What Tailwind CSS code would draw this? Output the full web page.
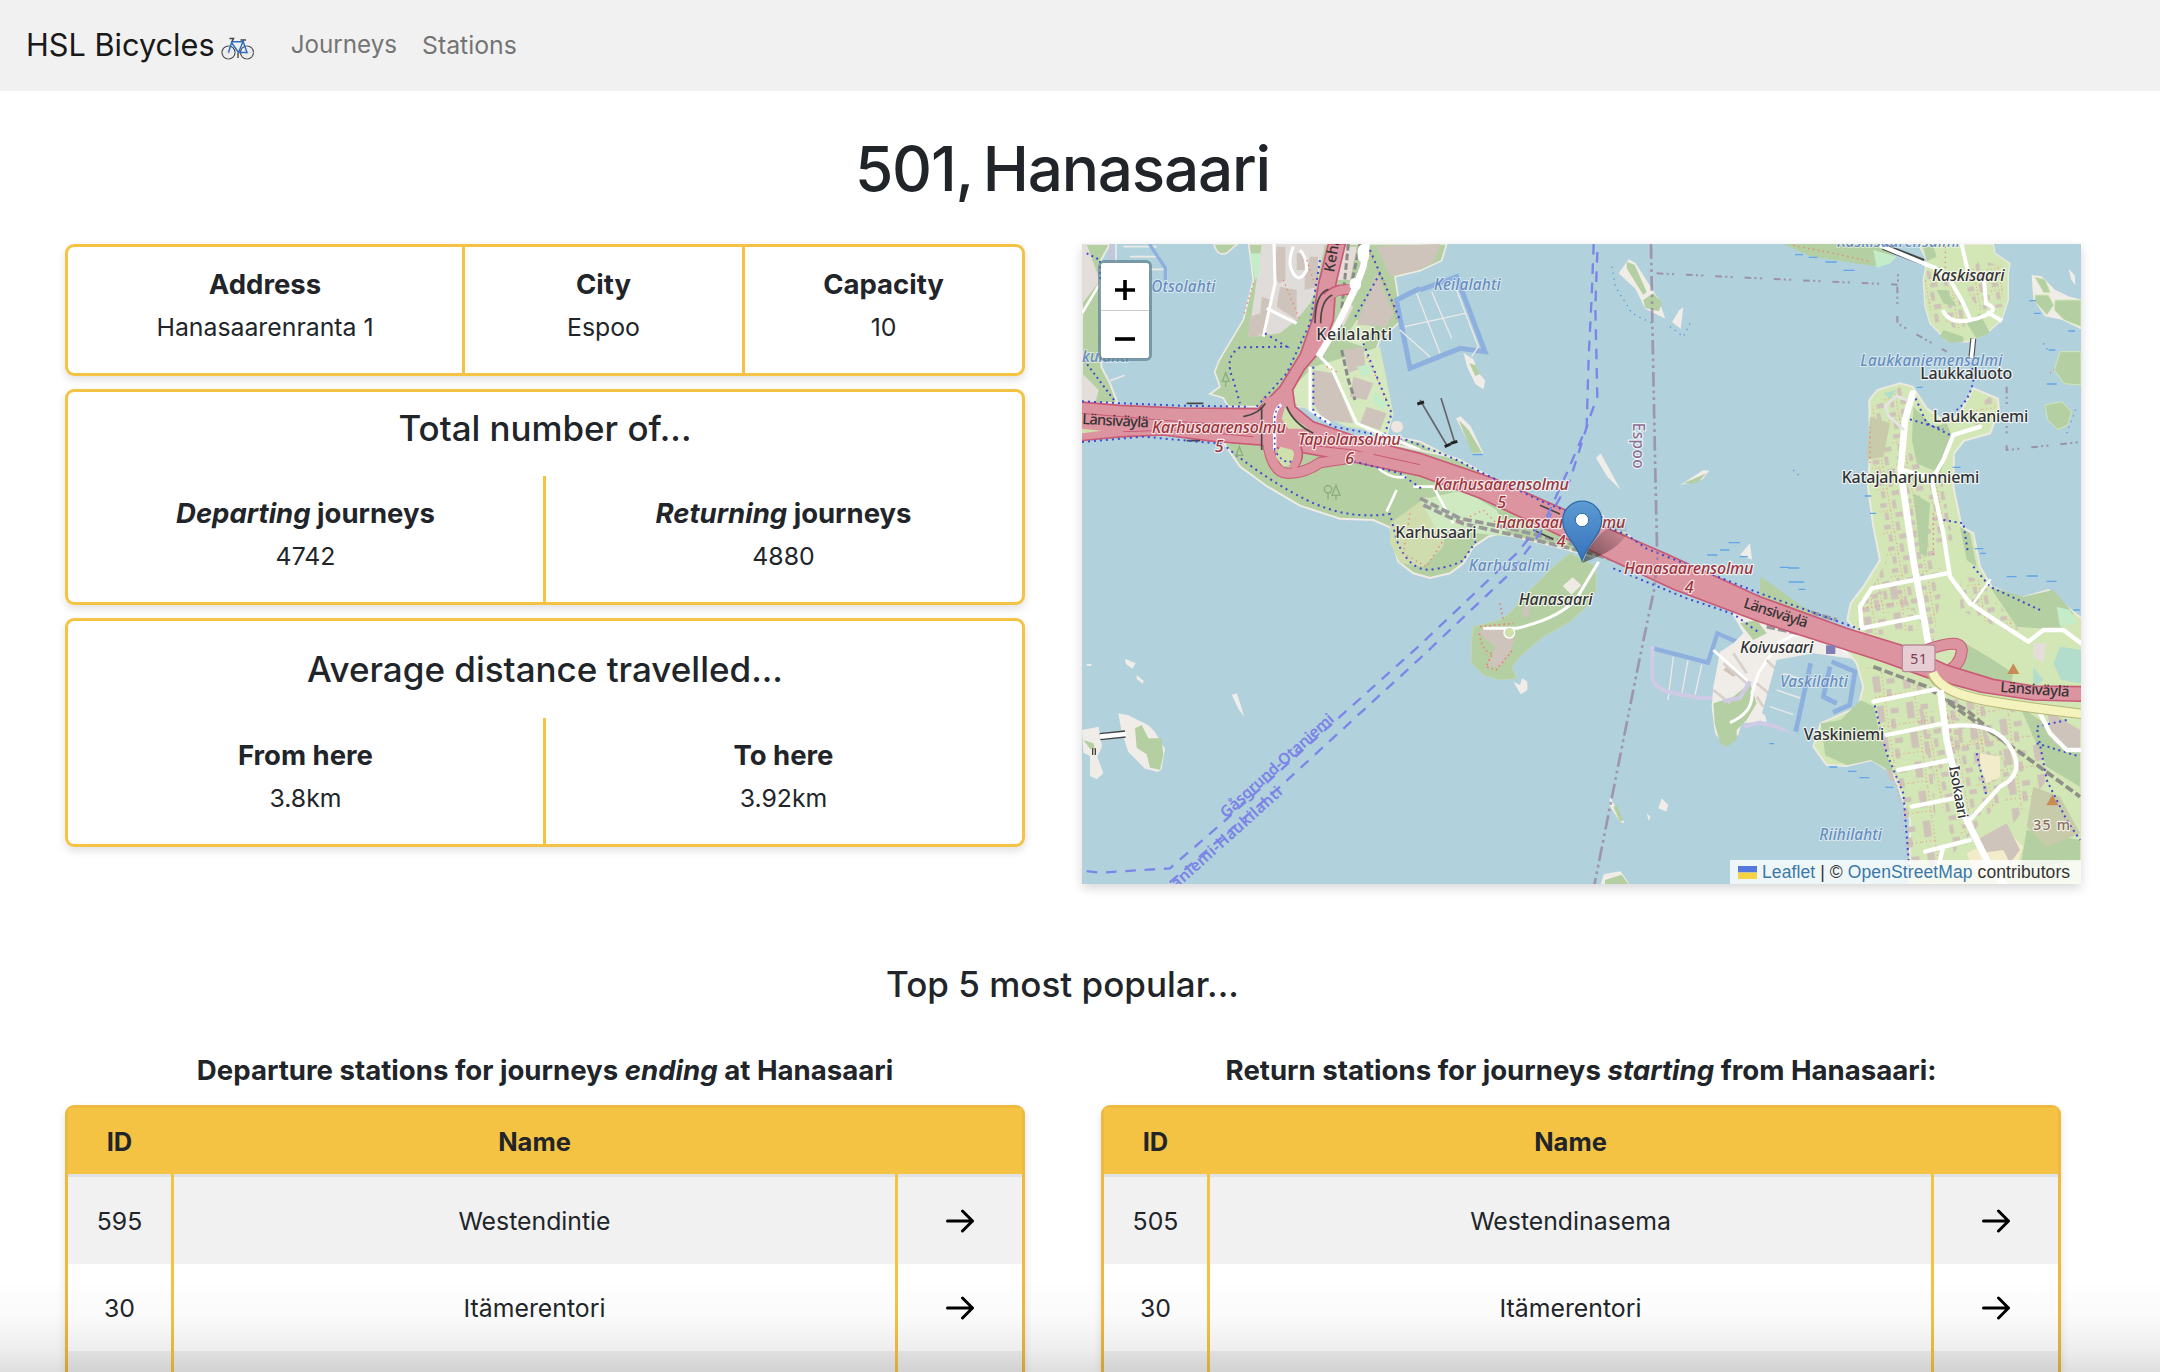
<!DOCTYPE html>
<html lang="en">
<head>
<meta charset="utf-8">
<title>HSL Bicycles</title>
<script src="https://cdn.jsdelivr.net/npm/@tailwindcss/browser@4"></script>
</head>
<body class="relative h-[1372px] overflow-hidden bg-white font-['Inter',sans-serif] text-[24.8px] leading-[42px] text-[#212529]">

<nav class="flex h-[91px] items-center bg-[#f1f1f1] pl-[26px]">
  <a class="-mt-[2px] flex items-center text-[30.7px] text-[#191919]">HSL Bicycles
    <svg class="ml-[6px] mt-[8px] h-[24px] w-[34px]" viewBox="0 0 34 24" fill="none">
      <circle cx="7.500" cy="15.500" r="6.500" stroke="#4a4a4a" stroke-width="1.200"/>
      <circle cx="26" cy="15.500" r="6.500" stroke="#4a4a4a" stroke-width="1.200"/>
      <path d="M3 11l9 9M3 20l9-9M7.500 9v13M1 15.500h13M21.500 11l9 9M21.500 20l9-9M26 9v13M20 15.500h13" stroke="#dadada" stroke-width=".6"/>
      <path d="M7.500 15.500L10.800 4.800H22L17.500 15.500H26L21.800 3.500M17.500 15.500L10.800 6" stroke="#2f6fc4" stroke-width="1.500"/>
      <path d="M8.500 1.500h4l-1.500 3M19.500 3h5.500" stroke="#444" stroke-width="1.500"/>
      <path d="M17 16v5" stroke="#6b5a48" stroke-width="1.600"/>
    </svg>
  </a>
  <a class="-mt-[2px] ml-[36px] text-[24.2px] text-[#747474]">Journeys</a>
  <a class="-mt-[2px] ml-[25px] text-[24.8px] text-[#747474]">Stations</a>
</nav>

<h1 class="mt-[43px] h-[70px] w-[2125px] text-center text-[62px] font-medium leading-[70px] tracking-[-1.2px] [word-spacing:-5px]">501, Hanasaari</h1>

<main class="px-[65px]">
  <div class="mt-[40px] flex items-start gap-[57px]">
    <div class="flex w-[960px] flex-col text-center">
      <section class="flex h-[132px] rounded-[9px] border-3 border-[#f5c344] shadow-[0_4px_8px_rgba(0,0,0,0.12)]">
        <div class="w-[397px] border-r-3 border-[#f5c344] pt-[16px]"><h5 class="text-[27.5px] font-bold">Address</h5><p class="pt-px">Hanasaarenranta 1</p></div>
        <div class="w-[280px] border-r-3 border-[#f5c344] pt-[16px]"><h5 class="text-[27.5px] font-bold">City</h5><p class="pt-px">Espoo</p></div>
        <div class="flex-1 pt-[16px]"><h5 class="text-[27.5px] font-bold">Capacity</h5><p class="pt-px">10</p></div>
      </section>
      <section class="mt-[13px] flex h-[216px] flex-col rounded-[9px] border-3 border-[#f5c344] shadow-[0_4px_8px_rgba(0,0,0,0.12)]">
        <h3 class="h-[84px] pt-[15px] text-[34.900px] font-medium">Total number of...</h3>
        <div class="grid flex-1 grid-cols-2">
          <div class="-mr-px border-r-3 border-[#f5c344] pt-[16px]"><h5 class="text-[27.5px] font-bold"><i>Departing</i> journeys</h5><p class="pt-px">4742</p></div>
          <div class="pt-[16px]"><h5 class="text-[27.5px] font-bold"><i>Returning</i> journeys</h5><p class="pt-px">4880</p></div>
        </div>
      </section>
      <section class="mt-[13px] flex h-[229px] flex-col rounded-[9px] border-3 border-[#f5c344] shadow-[0_4px_8px_rgba(0,0,0,0.12)]">
        <h3 class="h-[97px] pt-[27px] text-[35px] font-medium">Average distance travelled...</h3>
        <div class="grid flex-1 grid-cols-2">
          <div class="-mr-px border-r-3 border-[#f5c344] pt-[16px]"><h5 class="text-[27.5px] font-bold">From here</h5><p class="pt-px">3.8km</p></div>
          <div class="pt-[16px]"><h5 class="text-[27.5px] font-bold">To here</h5><p class="pt-px">3.92km</p></div>
        </div>
      </section>
    </div>

    <div class="relative h-[640px] w-[999px] shadow-[0_4px_10px_rgba(0,0,0,0.16)]">
      <svg class="block h-[640px] w-[999px]" viewBox="6 12 2997 1920" font-family="'Noto Sans',sans-serif" fill="none">
        <defs>
          <pattern id="houses" width="74" height="66" patternUnits="userSpaceOnUse" patternTransform="rotate(-10)">
            <path fill="#cfc2b8" d="M6 8h20v14H6zM42 4h12v26H42zM14 38h12v22H14zM46 42h22v14H46z"/>
            <path stroke="#ee8b80" stroke-width="3" stroke-dasharray="3 8" d="M34 0v66M0 32h40"/>
          </pattern>
          <pattern id="blocks" width="90" height="90" patternUnits="userSpaceOnUse" patternTransform="rotate(-8)">
            <path fill="#cfc2b8" d="M10 8h22v50H10zM52 20h24v16H52zM48 52h14v30H48z"/>
            <path stroke="#ee8b80" stroke-width="3" stroke-dasharray="3 9" d="M40 0v90M0 70h90"/>
          </pattern>
          <linearGradient id="pin" x1="0" y1="0" x2="0" y2="1"><stop offset="0" stop-color="#5c9bd3"/><stop offset="1" stop-color="#3673bd"/></linearGradient>
          <linearGradient id="pinshadow" x1="0" y1="1" x2="1" y2="0"><stop offset="0" stop-color="#000" stop-opacity=".5"/><stop offset="1" stop-color="#000" stop-opacity="0"/></linearGradient>
        </defs>
        <rect x="0" y="0" width="3010" height="1940" fill="#b1d1dd"/>

        <!-- north-west shore and Keilalahti -->
        <path fill="#b4cfa1" stroke="#ece7e1" stroke-width="6" d="M6 12H90L58 70 66 300 64 380 90 430 112 488 6 492z"/>
        <path fill="#e3deda" d="M6 12h14l40 110-54 70zM6 400l50 50-10 40H6z"/>
        <path stroke="#fff" stroke-width="8" d="M6 220L60 130"/>
        <path stroke="#c9c3dd" stroke-width="12" d="M94 12v60"/>
        <path stroke="#ece9e7" stroke-width="5" d="M108 12v56M130 20h100M150 50h90M150 88h105M90 422l44-16"/>
        <path stroke="#8fb0df" stroke-width="10" d="M208 12L256 84V120"/>
        <path fill="#b4cfa1" stroke="#ece7e1" stroke-width="5" d="M402 12q10 40 40 26l30-26z"/>
        <path fill="#b4cfa1" stroke="#efeae4" stroke-width="5" d="M506 12L520 120 490 240 430 340 418 360 404 395 420 440 390 462 430 474 445 500H720L1020 650 1090 640 1020 605 920 585 938 520 880 350 900 300 965 240 945 110 1020 92 1085 62 1100 12z"/>
        <path fill="#d6e8bd" d="M640 440l60-60 200-60 40 200-20 60-120-20-160-70zM1020 610l100 40-20 20zM790 300l40-60 50 20-30 60z"/>
        <path fill="#e0dcd9" d="M545 12H735L705 160 690 190 650 240 600 280 505 290 520 190z"/>
        <path fill="#cfc4bb" d="M890 20L1080 12 1062 66 1010 92 930 108zM890 100l50 120-20 40-90-6zM790 330l60-8 6 60-50 16zM700 390l60 10 60 150-90-10-30-50zM820 410l60 20-20 50-50-10zM860 500l60 20-20 50-60-20zM590 20h26v100l-20 10-14-30zM600 140l50 10v90l-60-40zM545 170l30 10-20 110-20-10zM510 230l30-10-5 70h-30zM650 40h24v50h-24zM690 50h24v90l-40 10v-40z"/>
        <path fill="#e6dcd8" d="M770 20h60l-20 100-50 0zM770 240l30-60 20 20-30 60z"/>
        <path fill="#c4ecc8" d="M510 40h30v60l-15 20zM830 380l40-8 10 20-30 20zM880 450l40 40-10 20-30-20z"/>
        <path stroke="#8a8a8a" stroke-width="9" stroke-dasharray="20 9" d="M805 12L780 260M840 12L815 130M785 330l20 90 20 60M1010 690l90 60"/>
        <path stroke="#fff" stroke-width="9" d="M582 12L585 130 550 290M560 205l90 45M640 20q-20 50 0 80t40-10q0-40-20-60M720 350L755 385 830 550 1020 630M690 380l0 130 60 40"/>
        <path stroke="#ee7f74" stroke-width="4" stroke-dasharray="4 11" d="M520 130L490 230M680 60l30 90M610 120l50 120M740 380l40 20M870 40l60 120 20 80M720 700q150-20 220 60M860 350l60 130"/>
        <circle cx="951" cy="560" r="18" fill="#f0e6e0"/>

        <!-- forest south of the motorway, Karhusaari -->
        <path fill="#b4cfa1" stroke="#efeae4" stroke-width="6" d="M432 610L480 680 560 738 660 797 780 836 880 840 930 862 942 920 955 965 1000 1000 1050 1014 1110 1000 1150 970 1180 920 1225 890 1260 880 1430 920 1540 950 1690 940 1640 880 1460 830 1380 790 1230 710 1130 655 700 560z"/>
        <path fill="#cfdcae" d="M930 850l110-80 60 60-10 90-60 60-70-10-30-60z"/>
        <path fill="#cfe9c0" d="M1020 780l130-30 100 60 40 80-100-10-120-10z"/>
        <path stroke="#fff" stroke-width="8" d="M1000 740h60l60 110M950 750l-30 65M890 680q40 40 90 30"/>
        <path stroke="#999" stroke-width="11" stroke-dasharray="26 10" d="M1020 775l120 60 150 30 240 60 200 60 340 95 200 60M1030 795l120 56 150 34 230 54 200 60 300 86"/>
        <path stroke="#3f49d0" stroke-width="6" stroke-dasharray="6 12" d="M440 622Q560 720 680 780T930 822L950 900Q990 1000 1060 988T1150 960L1190 900"/>
        <path stroke="#ee7f74" stroke-width="4" stroke-dasharray="4 11" d="M990 820l-20 120 70 40 50-80M1130 850l80-40 60 60"/>
        <g stroke="#8aae7f" stroke-width="4"><circle cx="744" cy="748" r="11"/><path d="M744 760v18M768 736l-12 30h24zM768 766v14M437 398l-10 26h20zM437 424v16M478 620l-10 26h20z"/></g>

        <!-- marinas -->
        <g stroke="#8eb0df" stroke-width="15"><path d="M1020 145L950 180 965 260 990 385 1140 325 1215 335 1130 110 1020 150"/><path stroke-width="13" d="M1722 1226L1884 1268 1912 1180 1980 1210M2195 1290L2150 1480"/></g>
        <path stroke="#ece9e7" stroke-width="4" d="M975 260l180-40M1055 155l60 140M1010 160l70 180M1130 150l65 170-20 30M960 270l90 80M1780 1250l-16 130M1824 1260l-20 110M1865 1275l-20 90"/>
        <path stroke="#cfcbe6" stroke-width="12" d="M1717 1218v100q10 30 60 40l80 16h110"/>
        <path stroke="#666" stroke-width="5" d="M1020 480l80 135M1083 474l40 130"/>
        <path stroke="#222" stroke-width="9" d="M1012 492l20-6M1094 620l18-8M1112 610l20-6"/>

        <!-- islets -->
        <g fill="#f0ece7">
          <path d="M1150 338l30 20 16 40 20 24-6 26-24-16-24-50zM1128 535l14-6 30 30 38 80-30 0zM1616 100l30-42 20 10 70 110 20 58-60-30-30-60zM1798 210l12-8-8 64-26-20zM1562 640l60 110-40-40-34-56zM1800 736l70-46 18 2-20 26z"/>
          <path d="M135 1256l32 14-10 16-20-14zM170 1305l22 18-4 8-18-14zM20 1272h14v6H20zM455 1364l16-4 22 70-16-20zM6 1470l50-10 10 60-14 30 18 50-20 18-20-10v-60l-20-10z"/>
          <path d="M115 1420l30 6 60 30 20 20 30 50-10 60-10 10-40-10-50-50-20-60zM1300 1325l20 10 6-20 16 10v26l-20 12zM1590 1670l44 80-14-4-32-50zM1745 1675l20 20-6 20-24-10zM1700 1720l12 10-6 12zM1562 1932l10-30 50-8 26 38zM1980 945l30-36 6 50z"/>
        </g>
        <g fill="#b4cfa1">
          <path d="M1168 370l20 6 12 26-14 6zM1136 540l30 30 40 68-30 0zM1640 65l24 10 36 80-10 10-50-80zM1690 180l30-20 26 30-10 24-40-10zM1810 730l70-30-30 30zM165 1465l20-10 20 40 40 0 5 50-10 44-30-6-10-40-30-20zM1600 1700l10-6 20 46-10 6zM1575 1920l50-16 20 28h-70zM10 1500l30 10 6 20-16-4z"/>
        </g>
        <path stroke="#444" stroke-width="22" d="M60 1490l76-8"/><path stroke="#fff" stroke-width="14" d="M60 1490l78-8"/>
        <path stroke="#444" stroke-width="4" d="M38 1525v20M46 1525v20"/>

        <!-- Hanasaari -->
        <path fill="#b4cfa1" stroke="#c2d6b0" stroke-width="3" d="M1548 980V1050L1520 1100 1470 1145 1390 1190 1330 1240 1295 1280 1310 1315 1260 1320 1210 1305 1175 1270 1175 1200 1180 1160 1260 1140 1290 1120 1330 1070 1370 1030 1420 980 1470 940z"/>
        <path fill="#efeae4" d="M1448 1038l30-26 26 24-30 28z"/>
        <path fill="#cfc4bb" d="M1210 1160l90 0 2 50-20 40-20 30-40 0 24-60-50-40zM1330 1100l20-6-6 36h-18z"/>
        <path stroke="#fff" stroke-width="9" d="M1210 1165h100q130-30 180-90l66-110"/>
        <circle cx="1288" cy="1178" r="16" fill="#cfe0ad" stroke="#fff" stroke-width="4"/>
        <path stroke="#ee7f74" stroke-width="5" stroke-dasharray="5 9" d="M1198 1180q10 60 40 60l-20 40 30 10 50-60M1260 1090l10 50M1200 1160l100-10"/>

        <!-- Koivusaari and Vaskilahti -->
        <path fill="#f0ece7" d="M1950 1110L1990 1180 1960 1210 1920 1235 1900 1340 1895 1400 1905 1480 1925 1508 1975 1485 1985 1450 2060 1445 2055 1425 2100 1290 2200 1240 2340 1260 2350 1380 2480 1380 2470 1240 2080 1120z"/>
        <path fill="#b4cfa1" d="M1980 1150l50-10 30 40-40 20zM1900 1390l60-20 50-40 20 60-30 50-30 30v30l-30 20-20-10-16-60zM2040 1010l30 20 140 100 130 50-300-90z"/>
        <path fill="#cfc4bb" d="M1930 1290l30 20 20-10-40-20zM2340 1260l60 30-20 20-50-20z"/>
        <path stroke="#fff" stroke-width="9" d="M1950 1448q70-30 66-90l20-60 60-90 60-30 120 40 70 50 20 80 34 60M1900 1230l110 100"/>
        <path stroke="#d7d0cb" stroke-width="8" d="M1930 1270l70 60M1960 1240l40 60M1900 1350l50 40M2060 1260l60 60M2030 1330l60 50M2030 1370l20 30"/>
        <path stroke="#cfcbe6" stroke-width="12" d="M1930 1384l50-10 30-50M1990 1460l50-12 110 30"/>
        <path stroke="#999" stroke-width="11" stroke-dasharray="26 9" d="M2060 1140l200 60 120 70 160 60M2060 1160l140 30"/>
        <path fill="#b1d1dd" d="M2090 1260l110-20 10 60-50 180-24 0-90-60z"/>
        <path stroke="#8eb0df" stroke-width="14" d="M2192 1270l-45 205M2255 1265l70 30-16 100-50 22M2250 1280l-20 90 40 20"/>
        <path stroke="#ece9e7" stroke-width="4" d="M2110 1300l60 20M2090 1350l70 24M2070 1400l70 24"/>

        <!-- Lauttasaari -->
        <path fill="#d2e7b5" stroke="#ece9e0" stroke-width="6" d="M2368 480L2392 450 2460 430 2498 440 2540 505 2600 548 2640 520 2680 445 2754 476 2757 512 2730 580 2652 602 2622 640 2620 740 2645 860 2680 880 2700 980 2735 1040 2820 1075 2905 1050 2960 1100 3010 1140V1940H2490V1740L2440 1600 2375 1560 2300 1578 2240 1575 2200 1520 2222 1450 2290 1420 2335 1400 2350 1340 2330 1270 2290 1220 2345 1190 2302 1140 2312 1090 2350 1040 2400 960 2380 860 2364 740 2370 640z"/>
        <path fill="url(#houses)" d="M2376 500l84-60 30 30-20 160 40 20 60-10 50 260-60 10 30 100-30 200-60-100-170 20 90-170-50-320zM2640 1000l60 20 140 180-200-90zM2500 1400l240 60 60 180-180 200-20-100z"/>
        <path fill="url(#blocks)" d="M2340 1080l120-50 60 140-180 20zM2360 1280l180 60 40 580-90 10-30-240-50-120-20-180zM2600 1350l220 60 120 160-140 180-60-160-140-60zM2660 520l70-50 20 30-60 60z"/>
        <path fill="#b4cfa1" d="M2500 500l60 60 40-10 20 50-40 100-70-30-14-70zM2222 1450l60-10 60-60 40 20 20 100 40 100-70-40-70 16-66-30zM2640 1200l100 60 60 40-10 40-180-40zM2730 1040l100 30 90-20 60 70-40 50-130-10zM2640 860l30 20 20 100-30-20zM2820 1400l180 120v120l-100-60zM2840 1770l160 30v60l-180 30zM2500 760l50 30-10 160-20-10z"/>
        <path fill="#c8cba9" d="M2860 1640l80 30 60 110-100 40-60-60zM2370 530l60 20-20 100-50 10z"/>
        <path fill="#b2dccb" d="M2920 1270l20-50 63 10v100l-60-10zM2860 1280l30 40-30 20zM2410 460l40-10-20 26z"/>
        <path fill="#c4ecc8" d="M2930 1100l40 10 20 40-50 10z"/>
        <path fill="#e3deda" d="M2860 1210l40 0-10 60-30-20z"/>
        <path fill="#f3eccb" d="M2700 1540l60 10 0 60-40 20-20-50zM2660 1840l130-60 40 40-30 80-110 10z"/>
        <path fill="#cfc4bb" d="M2690 1800l90-50 40 80-30 40-20-40-70 10zM2900 1410l100 60v60l-80-20z"/>
        <path stroke="#8f8f88" stroke-width="11" stroke-dasharray="26 10" d="M2380 1280l160 60 110 80 160 110 190 140M2600 1380l60 30 130 110"/>
        <path stroke="#3f49d0" stroke-width="6" stroke-dasharray="6 11" d="M2680 300l-6 60 6 60q-10 60-50 90M2500 460l40 90 80 40M2490 538l100 30M2590 840l60 10 14 90M2680 980l50 60 150 70M2380 1380l40 160 50 120 20 250M2690 1540l30 130M2960 1440l-90 20 30 160 60 120 40 60M2870 1510l130 40"/>
        <g stroke="#fff" stroke-width="13" stroke-linecap="round" stroke-linejoin="round">
          <path stroke-width="20" d="M2498 460L2475 540 2462 690 2500 960 2545 1210M2580 1340L2600 1500 2650 1720 2740 1900 2780 1940"/>
          <path d="M2620 585L2590 660 2555 720 2590 880 2610 1010 2670 1090 2760 1150 2845 1205 2890 1170 2950 1170 3003 1210M2470 690L2540 710M2620 585L2700 560M2345 1165L2340 1100 2375 1045 2600 1000M2345 1165L2520 1130M2380 1385L2580 1345M2420 1485L2590 1450M2600 1460Q2740 1440 2790 1520T2760 1640L2660 1750M2455 1590L2610 1560M2495 1700L2620 1675M2535 1835L2670 1800M2590 1820l-20 80M2875 1410L2910 1480 2960 1530H3003"/>
          <path stroke="#e4e4e4" stroke-width="8" d="M2480 480l-30-12-34 30 10 30 44 40"/>
          <path stroke-width="7" d="M2730 1020l-50 70"/>
        </g>

        <!-- motorway and its ramps -->
        <path stroke="#ca5a76" stroke-width="36" d="M2540 1230Q2650 1190 2645 1235T2590 1300"/>
        <path stroke="#dd94a1" stroke-width="30" d="M2540 1230Q2650 1190 2645 1235T2590 1300"/>
        <path stroke="#ca5a76" stroke-width="34" d="M562 520V600Q575 700 625 700T720 668L880 644"/>
        <path fill="#dd94a1" stroke="#ca5a76" stroke-width="5" d="M0 486L120 496 300 504 535 506 600 440 662 340 700 230 716 130 745 12H796L768 130 760 240 732 320 672 390 638 450 645 500 700 545 860 600 1020 640 1240 715 1400 785 1640 890 1760 942 2040 1070 2300 1165 2480 1220 2600 1275 2740 1318 2860 1338 3010 1340V1384L2860 1380 2700 1356 2540 1312 2400 1262 2040 1146 1780 1048 1560 945 1400 868 1200 775 1020 708 820 666 600 625 540 615 400 604 250 585 130 590 0 602z"/>
        <path stroke="#ca5a76" stroke-width="3" d="M6 520L300 545 520 560M130 575L300 570 520 590M640 610L820 630 1020 674"/>
        <path fill="#cfe0ad" d="M6 566l60 6-60 8zM615 500l20 30 50 36-60 0-20-30zM600 620l40 10 10 40-40 10-24-30z"/>
        <path stroke="#ca5a76" stroke-width="26" d="M648 610Q668 650 640 680"/>
        <path stroke="#dd94a1" stroke-width="28" d="M562 470V600Q575 700 625 700T720 668L880 644"/>
        <path stroke="#dd94a1" stroke-width="22" d="M640 600Q668 650 636 684"/>
        <path stroke="#ca5a76" stroke-width="32" d="M740 172Q770 140 820 152"/><path stroke="#dd94a1" stroke-width="26" d="M735 180Q770 140 824 150"/>
        <path stroke="#474747" stroke-width="5" d="M545 500v130M490 530q50-10 66-40M620 500q20 50 80 80M705 250q0-90 40-102M722 250q0-70 35-85M320 490h50M320 602h40M1380 796l60 26M1360 870l60 28"/>
        <path stroke="#fff" stroke-width="10" d="M584 630V530q4-26 20-36"/>
        <path stroke="#3f49d0" stroke-width="5" stroke-dasharray="6 10" d="M584 630V530q4-26 20-36M590 640q20 30 44 24"/>
        <path stroke="#fff" stroke-width="20" d="M860 12L850 80 828 140 770 260 715 350"/>
        <path stroke="#fff" stroke-width="34" stroke-linecap="round" d="M850 30v20M826 130v6"/>
        <path stroke="#3f49d0" stroke-width="6" stroke-dasharray="6 12" d="M6 484L130 490 300 497 500 500M6 606L190 590 430 612M530 500L620 400 690 250 720 60M555 280L620 320 480 322Q430 350 460 420L480 490M870 30L960 240M900 100L820 240M850 310L935 520 915 580M700 380V520L760 560 980 600 1120 655 1230 710 1390 786 1640 884 1700 926 2040 1060 2340 1168M1600 985L1820 1075 1960 1122 2040 1180M820 664L960 700 1030 750"/>
        <path stroke="#3f49d0" stroke-width="6" stroke-dasharray="6 10" d="M20 40l40 20v60M12 360l60 80 30 40"/>
        <path stroke="#b7b577" stroke-width="32" d="M2556 1300Q2580 1358 2720 1382T3010 1422"/>
        <path stroke="#f4f3bd" stroke-width="26" d="M2558 1297Q2580 1358 2720 1382T3010 1422"/>
        <path stroke="#fff" stroke-width="20" d="M2582 1350l6 60"/>
        <path fill="#c98a55" d="M2800 1270l18 32h-36zM2917 1664l18 32h-36z"/>
        <rect x="2238" y="1216" width="28" height="26" fill="#7e80b5"/>

        <!-- Kaskisaari and northern islands -->
        <path fill="#d2e7b5" stroke="#ece9e0" stroke-width="4" d="M2515 12L2540 60 2530 120 2535 200 2550 250 2600 302 2660 306 2720 280 2765 240 2785 180 2785 100 2790 70 2745 40 2740 12z"/>
        <path fill="url(#houses)" d="M2535 90l60 20 60 100 0 60-90-20-30-80zM2700 60l70 20 0 120-70 10-60-80z"/>
        <path fill="#b4cfa1" d="M2660 250l40-30 30 60-40 15zM2590 270l60 20 0 15-40 4-30-20zM2530 20l30 0 10 30-30 14zM2570 150l30 0 30 50-40-10zM2110 12L2190 48 2300 66 2380 78 2420 60 2440 40 2400 12z"/>
        <path fill="#c4ecc8" d="M2380 30l70 20-20 20-40 14z"/>
        <path stroke="#ee7f74" stroke-width="4" stroke-dasharray="4 11" d="M2140 16l140 28 90 20M2596 20v90M2370 560v120M2880 150l120 80M2910 400l60-60 40 60M2560 820l0 130"/>
        <path stroke="#444" stroke-width="20" d="M2410 20l120 46"/><path stroke="#fff" stroke-width="13" d="M2400 16l170 70"/>
        <path stroke="#fff" stroke-width="12" d="M2560 80L2610 120 2645 180 2672 240M2588 210Q2610 260 2690 236T2718 190L2712 120M2720 215l46 28M2645 12l20 90"/>
        <path stroke="#555" stroke-width="18" d="M2680 295l-6 60"/><path stroke="#fff" stroke-width="11" d="M2680 295l-6 60"/>
        <path fill="#f0ece7" d="M2855 105l30 4 40 40 40 20 40 10v90l-60-30-50-10-35-50z"/>
        <path fill="#b4cfa1" stroke="#d2e7b5" stroke-width="3" d="M2865 112l30 6 16 40-20 0zM2865 165l40 0 16 30-20 30-36-40zM2925 180l78 0v80l-50-20-30-30zM2940 335l63 0v100l-50-4-30-40zM2895 495l50-10 30 30-12 40-30 14-30-30z"/>
        <path fill="#f0ece7" d="M2966 86l18 20 2 30-12-16z"/>
        <path stroke="#62a5e8" stroke-width="4" d="M2145 44h24M2186 52h26M2236 66h34M2290 91h34M2848 182h20M2862 220h20M2965 273h20M2906 330h20M2900 432h30M2510 442h18M2618 682h24M2354 768h20M2370 820h18M2684 926h26M2700 940h18M1946 908h34M1882 945h30M1920 930h28M1980 950h24M1178 644h30M2100 982h26M2124 984h34M2126 1026h46M2156 1048h20M2780 1010h30M2840 1008h34M2900 1024h30M2068 1511h14M2248 1581h24M2304 1594h26M2338 1613h30M2416 1642h24M2980 1110h20"/>
        <path stroke="#5a9ad8" stroke-width="4" stroke-dasharray="4 14" d="M1596 80l10 60 50 80 60 30M1770 260l40 30 20-40M2140 690l20 20M2890 310l20 30M2960 580l30-80"/>

        <!-- administrative boundaries -->
        <path stroke="#98819f" stroke-width="8" stroke-dasharray="44 12 8 12 8 12" stroke-opacity=".75" d="M1713 12L1718 300 1726 700 1732 960 1722 1050 1680 1250 1600 1650 1542 1940"/>
        <path stroke="#98819f" stroke-width="6" stroke-dasharray="20 10 6 10 6 36" stroke-opacity=".8" d="M1730 100L2100 118 2454 134V70M2452 140V250L2600 335M2780 440V630L3003 606"/>

        <!-- ferry routes -->
        <g stroke="#7b86e8" stroke-width="7" stroke-dasharray="32 26">
          <path d="M1541 12L1535 170 1526 350 1520 560 1460 700 1400 830 1310 940 1020 1215 780 1430 420 1755 270 1885 60 1898 6 1892"/>
          <path d="M1552 36L1546 200 1552 470 1530 530 1470 720 1380 880 1290 1000 1020 1255 600 1640 255 1940"/>
        </g>

        <!-- labels -->
        <g font-size="48" font-weight="500" fill="#333" stroke="#fff" stroke-opacity=".75" stroke-width="7" stroke-linejoin="round" paint-order="stroke">
          <text x="709" y="299" textLength="227">Keilalahti</text>
          <text x="946" y="895" textLength="244">Karhusaari</text>
          <text x="2521" y="416" textLength="276">Laukkaluoto</text>
          <text x="2559" y="545" textLength="286">Laukkaniemi</text>
          <text x="2285" y="729" textLength="413">Katajaharjunniemi</text>
          <text x="2171" y="1500" textLength="242">Vaskiniemi</text>
          <g font-style="italic">
            <text x="2556" y="123" textLength="218">Kaskisaari</text>
            <text x="1316" y="1096" textLength="222">Hanasaari</text>
            <text x="1980" y="1240" textLength="220">Koivusaari</text>
          </g>
          <text transform="translate(6 552) rotate(3)" font-size="44" textLength="200" stroke="none">Länsiväylä</text>
          <text transform="translate(1988 1102) rotate(18)" font-size="44" textLength="200" stroke="none">Länsiväylä</text>
          <text transform="translate(2760 1356) rotate(4)" font-size="44" textLength="208" stroke="none">Länsiväylä</text>
          <text transform="translate(762 98) rotate(-80)" font-size="44" stroke="none">Kehä I</text>
          <text transform="translate(2607 1580) rotate(80)" font-size="44" textLength="160">Isokaari</text>
          <text x="2860" y="1769" font-size="42" fill="#876d5c" textLength="110">35 m</text>
          <text transform="translate(1660 548) rotate(90)" font-size="46" fill="#8d7095" textLength="138">Espoo</text>
        </g>
        <g font-size="48" font-weight="500" font-style="italic" fill="#9d343b" stroke="#fff" stroke-opacity=".75" stroke-width="7" stroke-linejoin="round" paint-order="stroke">
          <text x="216" y="579" textLength="402">Karhusaarensolmu</text><text x="404" y="636">5</text>
          <text x="654" y="615" textLength="308">Tapiolansolmu</text><text x="796" y="671">6</text>
          <text x="1062" y="749" textLength="405">Karhusaarensolmu</text><text x="1252" y="805">5</text>
          <text x="1248" y="863" textLength="388">Hanasaarensolmu</text><text x="1430" y="920">4</text>
          <text x="1632" y="1001" textLength="388">Hanasaarensolmu</text><text x="1814" y="1058">4</text>
        </g>
        <g font-size="46" font-weight="500" font-style="italic" fill="#678ebf" stroke="#fff" stroke-opacity=".5" stroke-width="6" stroke-linejoin="round" paint-order="stroke">
          <text x="214" y="155" textLength="192">Otsolahti</text>
          <text x="6" y="366" textLength="142">kulahti</text>
          <text x="1062" y="151" textLength="200">Keilalahti</text>
          <text x="2270" y="22" textLength="370">Kaskisaarensalmi</text>
          <text x="2341" y="377" textLength="426">Laukkaniemensalmi</text>
          <text x="1166" y="994" textLength="242">Karhusalmi</text>
          <text x="2100" y="1341" textLength="204">Vaskilahti</text>
          <text x="2218" y="1800" textLength="188">Riihilahti</text>
        </g>
        <g font-size="47" font-weight="600" fill="#7b83e6">
          <text transform="translate(438 1736) rotate(-42)" textLength="440">Gåsgrund-Otaniemi</text>
          <text transform="translate(246 1988) rotate(-42)" textLength="490">Otaniemi-Haukilahti</text>
        </g>
        <rect x="2467" y="1215" width="98" height="80" rx="8" fill="#e6cdd3" stroke="#b98a98" stroke-width="4"/>
        <text x="2516" y="1271" font-size="42" text-anchor="middle" fill="#7d3a50" textLength="50">51</text>

        <!-- station marker -->
        <path fill="url(#pinshadow)" d="M1508 968Q1530 900 1590 860T1640 880Q1620 930 1508 968z"/>
        <path fill="url(#pin)" stroke="#2e6ba8" stroke-width="4" d="M1506 962C1490 910 1448 885 1448 842A58 58 0 0 1 1565 842C1565 885 1522 910 1506 962z"/>
        <circle cx="1506" cy="840" r="20" fill="#fff" stroke="#2e6ba8" stroke-width="3"/>
      </svg>

      <div class="absolute left-[16px] top-[16px] flex w-[54px] flex-col rounded-[6px] border-[3px] border-[#5d8192]/70 bg-clip-padding">
        <button class="flex h-[48px] items-center justify-center rounded-t-[3px] border-b border-[#ccc] bg-white pt-[7px]"><svg class="size-[20px]" viewBox="0 0 20 20"><path d="M10 0v20M0 10h20" stroke="#000" stroke-width="3.600"/></svg></button>
        <button class="flex h-[47px] items-center justify-center rounded-b-[3px] bg-white pt-[8px]"><svg class="size-[20px]" viewBox="0 0 20 20"><path d="M0 10h20" stroke="#000" stroke-width="3.600"/></svg></button>
      </div>
      <div class="absolute bottom-0 right-0 flex h-[24px] w-[351px] items-center whitespace-pre bg-white/80 pl-[8px] font-['Liberation_Sans',sans-serif] text-[17.5px] leading-[24px] tracking-[0.1px] text-[#333]"><svg class="mr-[5px] mt-px h-[13px] w-[19px]" viewBox="0 0 19 13"><path fill="#5279db" d="M0 0h19v6.500H0z"/><path fill="#f5d344" d="M0 6.500h19V13H0z"/></svg><span class="text-[#3878a8]">Leaflet</span> | © <span class="text-[#3878a8]">OpenStreetMap</span> contributors</div>
    </div>
  </div>

  <h3 class="mt-[79px] h-[42px] w-[1995px] text-center text-[35px] font-medium">Top 5 most popular...</h3>

  <div class="mt-[44px] flex gap-[76px] text-center">
    <section class="w-[960px]">
      <h5 class="h-[56px] text-[27.6px] font-bold">Departure stations for journeys <i>ending</i> at Hanasaari</h5>
      <div class="rounded-t-[9px] border-3 border-b-0 border-[#edb93f] shadow-[0_4px_8px_rgba(0,0,0,0.12)]">
        <div class="grid h-[69px] grid-cols-[103px_727px_1fr] items-center border-b-3 border-[#dee2e6] bg-[#f5c344] pt-[2px] text-[25.5px] font-bold"><span>ID</span><span>Name</span><span></span></div>
        <div class="grid h-[87px] grid-cols-[103px_727px_1fr] bg-[#f1f1f1] leading-[88px]">
          <span class="-mt-[3px] h-[90px] pt-[3px]">595</span><span class="-mt-[3px] h-[90px] border-x-3 border-[#f5c344] pt-[3px]">Westendintie</span>
          <span class="flex items-center justify-center pt-px"><svg class="h-[24px] w-[28px]" viewBox="0 0 28 24" fill="none" stroke="#000" stroke-width="3" stroke-linecap="round" stroke-linejoin="round"><path d="M1.500 12h25M16.500 2l10 10-10 10"/></svg></span>
        </div>
        <div class="grid h-[87px] grid-cols-[103px_727px_1fr] leading-[89px]">
          <span>30</span><span class="h-[87px] border-x-3 border-[#f5c344]">Itämerentori</span>
          <span class="flex h-[87px] items-center justify-center pt-px"><svg class="h-[24px] w-[28px]" viewBox="0 0 28 24" fill="none" stroke="#000" stroke-width="3" stroke-linecap="round" stroke-linejoin="round"><path d="M1.500 12h25M16.500 2l10 10-10 10"/></svg></span>
        </div>
        <div class="grid h-[21px] grid-cols-[103px_727px_1fr] bg-[#f1f1f1]"><span></span><span class="border-x-3 border-[#f5c344]"></span></div>
      </div>
    </section>
    <section class="w-[960px]">
      <h5 class="h-[56px] text-[27.6px] font-bold">Return stations for journeys <i>starting</i> from Hanasaari:</h5>
      <div class="rounded-t-[9px] border-3 border-b-0 border-[#edb93f] shadow-[0_4px_8px_rgba(0,0,0,0.12)]">
        <div class="grid h-[69px] grid-cols-[103px_727px_1fr] items-center border-b-3 border-[#dee2e6] bg-[#f5c344] pt-[2px] text-[25.5px] font-bold"><span>ID</span><span>Name</span><span></span></div>
        <div class="grid h-[87px] grid-cols-[103px_727px_1fr] bg-[#f1f1f1] leading-[88px]">
          <span class="-mt-[3px] h-[90px] pt-[3px]">505</span><span class="-mt-[3px] h-[90px] border-x-3 border-[#f5c344] pt-[3px]">Westendinasema</span>
          <span class="flex items-center justify-center pt-px"><svg class="h-[24px] w-[28px]" viewBox="0 0 28 24" fill="none" stroke="#000" stroke-width="3" stroke-linecap="round" stroke-linejoin="round"><path d="M1.500 12h25M16.500 2l10 10-10 10"/></svg></span>
        </div>
        <div class="grid h-[87px] grid-cols-[103px_727px_1fr] leading-[89px]">
          <span>30</span><span class="h-[87px] border-x-3 border-[#f5c344]">Itämerentori</span>
          <span class="flex h-[87px] items-center justify-center pt-px"><svg class="h-[24px] w-[28px]" viewBox="0 0 28 24" fill="none" stroke="#000" stroke-width="3" stroke-linecap="round" stroke-linejoin="round"><path d="M1.500 12h25M16.500 2l10 10-10 10"/></svg></span>
        </div>
        <div class="grid h-[21px] grid-cols-[103px_727px_1fr] bg-[#f1f1f1]"><span></span><span class="border-x-3 border-[#f5c344]"></span></div>
      </div>
    </section>
  </div>
</main>

<div class="pointer-events-none absolute inset-x-0 bottom-0 h-[92px] bg-[linear-gradient(to_bottom,rgba(0,0,0,0)_0%,rgba(0,0,0,0.02)_40%,rgba(0,0,0,0.07)_77%,rgba(0,0,0,0.13)_100%)]"></div>
</body>
</html>
